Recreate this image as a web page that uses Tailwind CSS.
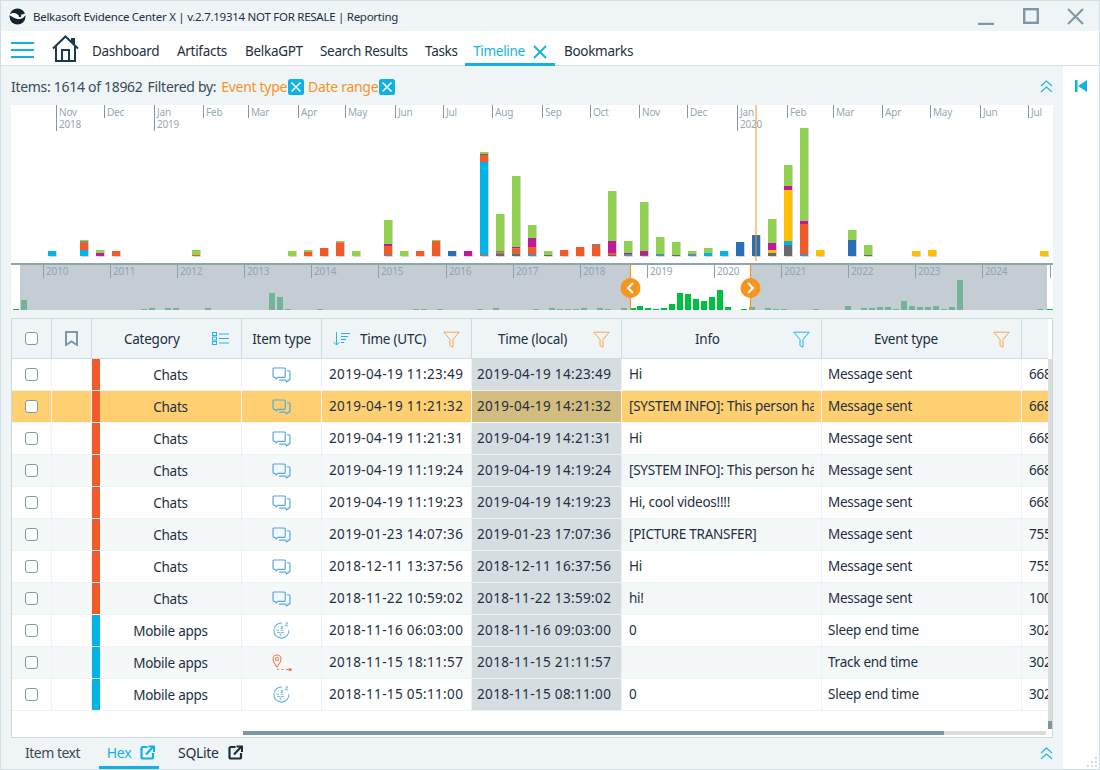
<!DOCTYPE html>
<html lang="en">
<head>
<meta charset="utf-8">
<title>Belkasoft Evidence Center X</title>
<script src="https://cdn.jsdelivr.net/npm/@tailwindcss/browser@4"></script>
</head>
<body class="w-[1100px] h-[770px] overflow-hidden bg-white text-[#1d2f3f] font-['Noto_Sans',sans-serif] text-[13px]">
<svg width="0" height="0" class="absolute">
  <defs>
    <symbol id="chat" viewBox="0 0 20 17"><g fill="none" stroke="#4ea6e4" stroke-width="1.2"><path d="M2.2 1h10.6a1.2 1.2 0 0 1 1.2 1.2v7.6a1.2 1.2 0 0 1-1.2 1.2H6l-1.5 1.6L3 11h-.8A1.2 1.2 0 0 1 1 9.8V2.2A1.2 1.2 0 0 1 2.2 1z"/><path d="M16 4h2a1 1 0 0 1 1 1v8a1 1 0 0 1-1 1h-1v.6L15.500 15.800 14 14H7.500"/></g></symbol>
    <symbol id="sleep" viewBox="0 0 18 18"><g fill="none" stroke="#62ade6"><path d="M9.500 1.100A8 8 0 1 0 16.900 8.500" stroke-width="1.100"/><path d="M3.500 8.500q1.400 1 2.800 0M8.300 8.500q1.400 1 2.800 0M4.500 11q3.500 1 7 0" stroke-width="1"/><ellipse cx="8" cy="13.800" rx="1" ry=".8" fill="#62ade6" stroke="none"/><path d="M8.500 4.500h2l-2 2.200h2M13 1h3l-3 3h3" stroke-width=".9"/></g></symbol>
    <symbol id="track" viewBox="0 0 20 18"><g fill="none" stroke="#f47a55" stroke-width="1.100"><path d="M5 13C3 10 1 8 1 5a4 4 0 0 1 8 0c0 3-2 5-4 8z"/><circle cx="5" cy="5" r="1.500"/><path d="M5 15.500h12" stroke-dasharray="2 2.500"/></g><rect x="16.500" y="14.500" width="3" height="2.200" fill="#f15a29"/></symbol>
    <symbol id="funnel" viewBox="0 0 17 17"><path d="M.8 1.200h15.400L10 8.500v7.700l-3-1.600V8.500z" fill="none" stroke="currentColor" stroke-width="1"/></symbol>
    <symbol id="dbl" viewBox="0 0 13 13"><path d="M1 6 6.500 1 12 6M1 12l5.500-5L12 12" fill="none" stroke="#22b5e6" stroke-width="1.200"/></symbol>
    <symbol id="xx" viewBox="0 0 16 16"><rect width="16" height="16" rx="2.500" fill="#0fb0e2"/><path d="M3.500 3.500l9 9M12.500 3.500l-9 9" stroke="#fff" stroke-width="1.500"/></symbol>
    <symbol id="open" viewBox="0 0 15 15"><g fill="none" stroke="currentColor" stroke-width="2.200"><path d="M7.500 2H3a1.500 1.500 0 0 0-1.500 1.500v8.500A1.500 1.500 0 0 0 3 13.500h8.500A1.500 1.500 0 0 0 13 12V8"/><path d="M6 9.500l7-7.500M8.500 1.500H14V7"/></g></symbol>
  </defs>
</svg>

<div class="w-full h-full flex flex-col border border-[#d2dfe5]">
  <!-- title bar -->
  <div class="h-[30px] shrink-0 bg-[#eff4f7] flex items-center pl-[8px]">
    <svg width="17" height="17" viewBox="0 0 17 17" class="shrink-0"><circle cx="8.500" cy="8.500" r="8" fill="#13232f"/><path d="M0 6.500C4 4 7.500 4.500 9.500 7.500L16.500 5.500C16 9.500 12.500 11.500 9 11C6 10.500 3 9 0 6.500z" fill="#fff"/><circle cx="11" cy="8" r="1.200" fill="#13232f"/></svg>
    <span class="ml-[7px] pt-[2px] text-[11.500px] tracking-[-0.27px] text-[#1d2f3f] whitespace-nowrap">Belkasoft Evidence Center X | v.2.7.19314 NOT FOR RESALE | Reporting</span>
    <div class="ml-auto flex items-center pr-[15px]">
      <svg width="16" height="17" viewBox="0 0 16 17"><path d="M0 16h16" stroke="#7d98a4" stroke-width="2.500"/></svg>
      <svg width="16" height="16" viewBox="0 0 16 16" class="ml-[29px]"><rect x="1.200" y="1.200" width="13.600" height="13.600" fill="none" stroke="#7d98a4" stroke-width="2.400"/></svg>
      <svg width="17" height="17" viewBox="0 0 17 17" class="ml-[28px]"><path d="M1 1l15 15M16 1L1 16" stroke="#7d98a4" stroke-width="2"/></svg>
    </div>
  </div>
  <!-- nav -->
  <div class="h-[35px] shrink-0 bg-white border-b border-[#d2dfe5] flex items-center relative">
    <svg width="23" height="16" viewBox="0 0 23 16" class="ml-[10px] mt-[4px]"><path d="M0 1h23M0 8h23M0 15h23" stroke="#10b2e4" stroke-width="2"/></svg>
    <svg width="27" height="27" viewBox="0 0 27 27" class="ml-[18px]"><g fill="none" stroke="#1c3a4f" stroke-width="2"><path d="M1 13.500 13.500 1.500 26 13.500"/><path d="M4 11v15h19V11"/><path d="M10 26V15h7v11"/><path d="M20 7V4h2v5"/></g></svg>
    <div class="ml-[13px] flex items-center h-full text-[13.500px] tracking-[-0.3px] whitespace-nowrap">
      <span class="w-[85px] pt-[6px]">Dashboard</span>
      <span class="w-[68px] pt-[6px]">Artifacts</span>
      <span class="w-[75px] pt-[6px]">BelkaGPT</span>
      <span class="w-[105px] pt-[6px]">Search Results</span>
      <span class="w-[40px] pt-[6px]">Tasks</span>
      <div class="w-[90px] h-full pt-[8px] flex items-center justify-center text-[#10b2e4] border-b-[3px] border-[#10b2e4] relative top-[1px]">
        <span>Timeline</span>
        <svg width="14" height="14" viewBox="0 0 14 14" class="ml-[8px]"><path d="M1 1l12 12M13 1L1 13" stroke="#10b2e4" stroke-width="1.800"/></svg>
      </div>
      <span class="ml-[9px] pt-[6px]">Bookmarks</span>
    </div>
  </div>
  <!-- main -->
  <div class="flex-1 flex min-h-0">
    <div class="w-[1062px] shrink-0 bg-[#eff4f7] pl-[10px] flex flex-col">
      <!-- toolbar -->
      <div class="h-[39px] shrink-0 flex items-center pr-[10px] pt-[2px] text-[14px] tracking-[-0.3px] whitespace-nowrap">
        <span class="text-[#3a4b58] mr-[5px]">Items: 1614 of 18962</span>
        <span class="text-[#3a4b58] mr-[5px]">Filtered by:</span>
        <span class="text-[#f7941d]">Event type</span>
        <svg width="16" height="16" class="ml-[1px] mr-[4px]"><use href="#xx"/></svg>
        <span class="text-[#f7941d]">Date range</span>
        <svg width="16" height="16" class="ml-[1px]"><use href="#xx"/></svg>
        <svg width="13" height="13" class="ml-auto"><use href="#dbl"/></svg>
      </div>
      <!-- chart -->
      <svg id="chart" width="1042" height="205" viewBox="11 105 1042 205" class="shrink-0 bg-white block">
        <g id="chartbars"></g>
        <g stroke="#7f9aa6" stroke-width="1">
          <path d="M56.500 105v26M104.500 105v13M154.500 105v26M203.500 105v13M248.500 105v13M298.500 105v13M345.500 105v13M395.500 105v13M443.500 105v13M492.500 105v13M542.500 105v13M590.500 105v13M639.500 105v13M687.500 105v13M737.500 105v26M787.500 105v13M833.500 105v13M882.500 105v13M930.500 105v13M980.500 105v13M1028.500 105v13"/>
        </g>
        <g fill="#93a9b5" font-size="10" letter-spacing="-0.2">
          <text x="59" y="115.500">Nov</text><text x="59" y="128">2018</text><text x="107" y="115.500">Dec</text><text x="157" y="115.500">Jan</text><text x="157" y="128">2019</text><text x="206" y="115.500">Feb</text><text x="251" y="115.500">Mar</text><text x="301" y="115.500">Apr</text><text x="348" y="115.500">May</text><text x="398" y="115.500">Jun</text><text x="446" y="115.500">Jul</text><text x="495" y="115.500">Aug</text><text x="545" y="115.500">Sep</text><text x="593" y="115.500">Oct</text><text x="642" y="115.500">Nov</text><text x="690" y="115.500">Dec</text><text x="740" y="115.500">Jan</text><text x="740" y="128">2020</text><text x="790" y="115.500">Feb</text><text x="836" y="115.500">Mar</text><text x="885" y="115.500">Apr</text><text x="933" y="115.500">May</text><text x="983" y="115.500">Jun</text><text x="1031" y="115.500">Jul</text>
        </g>
        <path d="M756 105v156" stroke="#f7941d" stroke-width="1"/>
        <rect x="20" y="265" width="1027" height="45" fill="#c5cdd4"/>
        <rect x="630" y="265" width="120" height="45" fill="#fff"/>
        <g id="overview"></g>
        <path d="M11 264h1042" stroke="#8ea5ae" stroke-width="2"/>
        <g stroke="#8ba0ab" stroke-width="1"><path d="M43.500 265v13M110.500 265v13M177.500 265v13M244.500 265v13M311.500 265v13M378.500 265v13M446.500 265v13M513.500 265v13M580.500 265v13M647.500 265v13M714.500 265v13M781.500 265v13M848.500 265v13M915.500 265v13M982.500 265v13M1050.500 265v13"/></g>
        <g fill="#93a5b0" font-size="10" letter-spacing="-0.1">
          <text x="46" y="275">2010</text><text x="113" y="275">2011</text><text x="180" y="275">2012</text><text x="247" y="275">2013</text><text x="314" y="275">2014</text><text x="381" y="275">2015</text><text x="449" y="275">2016</text><text x="516" y="275">2017</text><text x="583" y="275">2018</text><text x="650" y="275">2019</text><text x="717" y="275">2020</text><text x="784" y="275">2021</text><text x="851" y="275">2022</text><text x="918" y="275">2023</text><text x="985" y="275">2024</text>
        </g>
        <path d="M630.500 265v45M750.500 265v45" stroke="#f7941d" stroke-width="1.200"/>
        <circle cx="630.500" cy="288" r="10" fill="#f7941d"/>
        <circle cx="750.500" cy="288" r="10" fill="#f7941d"/>
        <path d="M633 283l-5 5 5 5M748 283l5 5-5 5" fill="none" stroke="#fff" stroke-width="2.200"/>
      </svg>
      <!-- table -->
      <div class="mt-[8px] h-[420px] shrink-0 w-[1042px] bg-white border border-[#cbd8de] relative overflow-hidden">
        <div class="w-[1036px] overflow-hidden">
          <div class="grid grid-cols-[40px_40px_150px_80px_150px_150px_200px_200px_26px] h-[40px] bg-[#eff4f7] border-b border-[#cfdde3] text-[13.500px] tracking-[-0.25px] whitespace-nowrap">
            <div class="border-r border-[#cfdde3] flex items-center justify-center"><span class="w-[13px] h-[13px] rounded-[3px] border border-[#7e9aa5] bg-white"></span></div>
            <div class="border-r border-[#cfdde3] flex items-center justify-center"><svg width="13" height="15" viewBox="0 0 13 15"><path d="M1 1h11v13L6.500 10.500 1 14z" fill="none" stroke="#7e98a4" stroke-width="2"/></svg></div>
            <div class="border-r border-[#cfdde3] flex items-center relative"><span class="ml-[32px] pt-[2px]">Category</span><svg width="17" height="13" viewBox="0 0 17 13" class="absolute left-[120px] top-[13px]"><g fill="none" stroke="#22b5e6"><rect x=".5" y=".5" width="4" height="3"/><rect x=".5" y="5" width="4" height="3"/><rect x=".5" y="9.500" width="4" height="3"/><path d="M7 2h10M7 6.500h10M7 11h10"/></g></svg></div>
            <div class="border-r border-[#cfdde3] flex items-center justify-center"><span class="pt-[2px]">Item type</span></div>
            <div class="border-r border-[#cfdde3] flex items-center relative">
              <svg width="18" height="14" viewBox="0 0 18 14" class="ml-[11px]"><g fill="none" stroke="#22b5e6"><path d="M3.500 0v13M.5 10l3 3 3-3"/><path d="M8 1.500h9M8 4.500h7M8 7.500h5M8 10.500h3"/></g></svg>
              <span class="ml-[9px] pt-[2px]">Time (UTC)</span>
              <svg width="17" height="17" class="absolute left-[121px] top-[12px] text-[#f7a64a]"><use href="#funnel"/></svg>
            </div>
            <div class="border-r border-[#cfdde3] flex items-center relative"><span class="ml-[26px] pt-[2px]">Time (local)</span><svg width="17" height="17" class="absolute left-[121px] top-[12px] text-[#f7a64a]"><use href="#funnel"/></svg></div>
            <div class="border-r border-[#cfdde3] flex items-center relative"><span class="ml-[73px] pt-[2px]">Info</span><svg width="17" height="17" class="absolute left-[171px] top-[12px] text-[#22b5e6]"><use href="#funnel"/></svg></div>
            <div class="border-r border-[#cfdde3] flex items-center relative"><span class="ml-[52px] pt-[2px]">Event type</span><svg width="17" height="17" class="absolute left-[171px] top-[12px] text-[#f7a64a]"><use href="#funnel"/></svg></div>
            <div></div>
          </div>

          <div class="text-[13.500px] tracking-[-0.25px] whitespace-nowrap">
            <!-- row 1 -->
            <div class="grid grid-cols-[40px_40px_150px_80px_150px_150px_200px_200px_26px] h-[32px] border-b border-[#edf2f4]">
              <div class="border-r border-[#edf2f4] flex items-center justify-center"><span class="w-[13px] h-[13px] rounded-[3px] border border-[#7e9aa5] bg-white"></span></div>
              <div class="border-r border-[#edf2f4]"></div>
              <div class="border-r border-[#edf2f4] flex"><span class="w-[8px] bg-[#f15a29]"></span><span class="flex-1 flex items-center justify-center pt-[2px]">Chats</span></div>
              <div class="border-r border-[#edf2f4] flex items-center justify-center"><svg width="19" height="16"><use href="#chat"/></svg></div>
              <div class="border-r border-[#edf2f4] flex items-center pl-[7px] tracking-[0.35px]">2019-04-19 11:23:49</div>
              <div class="border-r border-[#edf2f4] flex items-center pl-[5px] bg-[#d5dde0] tracking-[0.35px]">2019-04-19 14:23:49</div>
              <div class="border-r border-[#edf2f4] flex items-center pl-[7px]">Hi</div>
              <div class="border-r border-[#edf2f4] flex items-center pl-[6px]">Message sent</div>
              <div class="flex items-center pl-[7px] overflow-hidden">6684</div>
            </div>
            <!-- row 2 -->
            <div class="grid grid-cols-[40px_40px_150px_80px_150px_150px_200px_200px_26px] h-[32px] border-b border-[#f4f7f8] bg-[#ffd072]">
              <div class="border-r border-[#f4f7f8] flex items-center justify-center"><span class="w-[13px] h-[13px] rounded-[3px] border border-[#7e9aa5] bg-white"></span></div>
              <div class="border-r border-[#f4f7f8]"></div>
              <div class="border-r border-[#f4f7f8] flex"><span class="w-[8px] bg-[#f15a29]"></span><span class="flex-1 flex items-center justify-center pt-[2px]">Chats</span></div>
              <div class="border-r border-[#f4f7f8] flex items-center justify-center"><svg width="19" height="16"><use href="#chat"/></svg></div>
              <div class="border-r border-[#f4f7f8] flex items-center pl-[7px] tracking-[0.35px]">2019-04-19 11:21:32</div>
              <div class="border-r border-[#f4f7f8] flex items-center pl-[5px] bg-[#d3bc80] tracking-[0.35px]">2019-04-19 14:21:32</div>
              <div class="border-r border-[#f4f7f8] flex items-center pl-[7px] pr-[7px]"><span class="block overflow-hidden">[SYSTEM INFO]: This person has left</span></div>
              <div class="border-r border-[#f4f7f8] flex items-center pl-[6px]">Message sent</div>
              <div class="flex items-center pl-[7px] overflow-hidden">6684</div>
            </div>
            <!-- row 3 -->
            <div class="grid grid-cols-[40px_40px_150px_80px_150px_150px_200px_200px_26px] h-[32px] border-b border-[#edf2f4]">
              <div class="border-r border-[#edf2f4] flex items-center justify-center"><span class="w-[13px] h-[13px] rounded-[3px] border border-[#7e9aa5] bg-white"></span></div>
              <div class="border-r border-[#edf2f4]"></div>
              <div class="border-r border-[#edf2f4] flex"><span class="w-[8px] bg-[#f15a29]"></span><span class="flex-1 flex items-center justify-center pt-[2px]">Chats</span></div>
              <div class="border-r border-[#edf2f4] flex items-center justify-center"><svg width="19" height="16"><use href="#chat"/></svg></div>
              <div class="border-r border-[#edf2f4] flex items-center pl-[7px] tracking-[0.35px]">2019-04-19 11:21:31</div>
              <div class="border-r border-[#edf2f4] flex items-center pl-[5px] bg-[#d5dde0] tracking-[0.35px]">2019-04-19 14:21:31</div>
              <div class="border-r border-[#edf2f4] flex items-center pl-[7px]">Hi</div>
              <div class="border-r border-[#edf2f4] flex items-center pl-[6px]">Message sent</div>
              <div class="flex items-center pl-[7px] overflow-hidden">6684</div>
            </div>
            <!-- row 4 -->
            <div class="grid grid-cols-[40px_40px_150px_80px_150px_150px_200px_200px_26px] h-[32px] border-b border-[#edf2f4] bg-[#f5f8f9]">
              <div class="border-r border-[#edf2f4] flex items-center justify-center"><span class="w-[13px] h-[13px] rounded-[3px] border border-[#7e9aa5] bg-white"></span></div>
              <div class="border-r border-[#edf2f4]"></div>
              <div class="border-r border-[#edf2f4] flex"><span class="w-[8px] bg-[#f15a29]"></span><span class="flex-1 flex items-center justify-center pt-[2px]">Chats</span></div>
              <div class="border-r border-[#edf2f4] flex items-center justify-center"><svg width="19" height="16"><use href="#chat"/></svg></div>
              <div class="border-r border-[#edf2f4] flex items-center pl-[7px] tracking-[0.35px]">2019-04-19 11:19:24</div>
              <div class="border-r border-[#edf2f4] flex items-center pl-[5px] bg-[#d5dde0] tracking-[0.35px]">2019-04-19 14:19:24</div>
              <div class="border-r border-[#edf2f4] flex items-center pl-[7px] pr-[7px]"><span class="block overflow-hidden">[SYSTEM INFO]: This person has left</span></div>
              <div class="border-r border-[#edf2f4] flex items-center pl-[6px]">Message sent</div>
              <div class="flex items-center pl-[7px] overflow-hidden">6684</div>
            </div>
            <!-- row 5 -->
            <div class="grid grid-cols-[40px_40px_150px_80px_150px_150px_200px_200px_26px] h-[32px] border-b border-[#edf2f4]">
              <div class="border-r border-[#edf2f4] flex items-center justify-center"><span class="w-[13px] h-[13px] rounded-[3px] border border-[#7e9aa5] bg-white"></span></div>
              <div class="border-r border-[#edf2f4]"></div>
              <div class="border-r border-[#edf2f4] flex"><span class="w-[8px] bg-[#f15a29]"></span><span class="flex-1 flex items-center justify-center pt-[2px]">Chats</span></div>
              <div class="border-r border-[#edf2f4] flex items-center justify-center"><svg width="19" height="16"><use href="#chat"/></svg></div>
              <div class="border-r border-[#edf2f4] flex items-center pl-[7px] tracking-[0.35px]">2019-04-19 11:19:23</div>
              <div class="border-r border-[#edf2f4] flex items-center pl-[5px] bg-[#d5dde0] tracking-[0.35px]">2019-04-19 14:19:23</div>
              <div class="border-r border-[#edf2f4] flex items-center pl-[7px]">Hi, cool videos!!!!</div>
              <div class="border-r border-[#edf2f4] flex items-center pl-[6px]">Message sent</div>
              <div class="flex items-center pl-[7px] overflow-hidden">6684</div>
            </div>
            <!-- row 6 -->
            <div class="grid grid-cols-[40px_40px_150px_80px_150px_150px_200px_200px_26px] h-[32px] border-b border-[#edf2f4] bg-[#f5f8f9]">
              <div class="border-r border-[#edf2f4] flex items-center justify-center"><span class="w-[13px] h-[13px] rounded-[3px] border border-[#7e9aa5] bg-white"></span></div>
              <div class="border-r border-[#edf2f4]"></div>
              <div class="border-r border-[#edf2f4] flex"><span class="w-[8px] bg-[#f15a29]"></span><span class="flex-1 flex items-center justify-center pt-[2px]">Chats</span></div>
              <div class="border-r border-[#edf2f4] flex items-center justify-center"><svg width="19" height="16"><use href="#chat"/></svg></div>
              <div class="border-r border-[#edf2f4] flex items-center pl-[7px] tracking-[0.35px]">2019-01-23 14:07:36</div>
              <div class="border-r border-[#edf2f4] flex items-center pl-[5px] bg-[#d5dde0] tracking-[0.35px]">2019-01-23 17:07:36</div>
              <div class="border-r border-[#edf2f4] flex items-center pl-[7px]">[PICTURE TRANSFER]</div>
              <div class="border-r border-[#edf2f4] flex items-center pl-[6px]">Message sent</div>
              <div class="flex items-center pl-[7px] overflow-hidden">7551</div>
            </div>
            <!-- row 7 -->
            <div class="grid grid-cols-[40px_40px_150px_80px_150px_150px_200px_200px_26px] h-[32px] border-b border-[#edf2f4]">
              <div class="border-r border-[#edf2f4] flex items-center justify-center"><span class="w-[13px] h-[13px] rounded-[3px] border border-[#7e9aa5] bg-white"></span></div>
              <div class="border-r border-[#edf2f4]"></div>
              <div class="border-r border-[#edf2f4] flex"><span class="w-[8px] bg-[#f15a29]"></span><span class="flex-1 flex items-center justify-center pt-[2px]">Chats</span></div>
              <div class="border-r border-[#edf2f4] flex items-center justify-center"><svg width="19" height="16"><use href="#chat"/></svg></div>
              <div class="border-r border-[#edf2f4] flex items-center pl-[7px] tracking-[0.35px]">2018-12-11 13:37:56</div>
              <div class="border-r border-[#edf2f4] flex items-center pl-[5px] bg-[#d5dde0] tracking-[0.35px]">2018-12-11 16:37:56</div>
              <div class="border-r border-[#edf2f4] flex items-center pl-[7px]">Hi</div>
              <div class="border-r border-[#edf2f4] flex items-center pl-[6px]">Message sent</div>
              <div class="flex items-center pl-[7px] overflow-hidden">7551</div>
            </div>
            <!-- row 8 -->
            <div class="grid grid-cols-[40px_40px_150px_80px_150px_150px_200px_200px_26px] h-[32px] border-b border-[#edf2f4] bg-[#f5f8f9]">
              <div class="border-r border-[#edf2f4] flex items-center justify-center"><span class="w-[13px] h-[13px] rounded-[3px] border border-[#7e9aa5] bg-white"></span></div>
              <div class="border-r border-[#edf2f4]"></div>
              <div class="border-r border-[#edf2f4] flex"><span class="w-[8px] bg-[#f15a29]"></span><span class="flex-1 flex items-center justify-center pt-[2px]">Chats</span></div>
              <div class="border-r border-[#edf2f4] flex items-center justify-center"><svg width="19" height="16"><use href="#chat"/></svg></div>
              <div class="border-r border-[#edf2f4] flex items-center pl-[7px] tracking-[0.35px]">2018-11-22 10:59:02</div>
              <div class="border-r border-[#edf2f4] flex items-center pl-[5px] bg-[#d5dde0] tracking-[0.35px]">2018-11-22 13:59:02</div>
              <div class="border-r border-[#edf2f4] flex items-center pl-[7px]">hi!</div>
              <div class="border-r border-[#edf2f4] flex items-center pl-[6px]">Message sent</div>
              <div class="flex items-center pl-[7px] overflow-hidden">1002</div>
            </div>
            <!-- row 9 -->
            <div class="grid grid-cols-[40px_40px_150px_80px_150px_150px_200px_200px_26px] h-[32px] border-b border-[#edf2f4]">
              <div class="border-r border-[#edf2f4] flex items-center justify-center"><span class="w-[13px] h-[13px] rounded-[3px] border border-[#7e9aa5] bg-white"></span></div>
              <div class="border-r border-[#edf2f4]"></div>
              <div class="border-r border-[#edf2f4] flex"><span class="w-[8px] bg-[#00b4e6]"></span><span class="flex-1 flex items-center justify-center pt-[2px]">Mobile apps</span></div>
              <div class="border-r border-[#edf2f4] flex items-center justify-center"><svg width="17" height="17"><use href="#sleep"/></svg></div>
              <div class="border-r border-[#edf2f4] flex items-center pl-[7px] tracking-[0.35px]">2018-11-16 06:03:00</div>
              <div class="border-r border-[#edf2f4] flex items-center pl-[5px] bg-[#d5dde0] tracking-[0.35px]">2018-11-16 09:03:00</div>
              <div class="border-r border-[#edf2f4] flex items-center pl-[7px]">0</div>
              <div class="border-r border-[#edf2f4] flex items-center pl-[6px]">Sleep end time</div>
              <div class="flex items-center pl-[7px] overflow-hidden">3021</div>
            </div>
            <!-- row 10 -->
            <div class="grid grid-cols-[40px_40px_150px_80px_150px_150px_200px_200px_26px] h-[32px] border-b border-[#edf2f4] bg-[#f5f8f9]">
              <div class="border-r border-[#edf2f4] flex items-center justify-center"><span class="w-[13px] h-[13px] rounded-[3px] border border-[#7e9aa5] bg-white"></span></div>
              <div class="border-r border-[#edf2f4]"></div>
              <div class="border-r border-[#edf2f4] flex"><span class="w-[8px] bg-[#00b4e6]"></span><span class="flex-1 flex items-center justify-center pt-[2px]">Mobile apps</span></div>
              <div class="border-r border-[#edf2f4] flex items-center justify-center"><svg width="20" height="18"><use href="#track"/></svg></div>
              <div class="border-r border-[#edf2f4] flex items-center pl-[7px] tracking-[0.35px]">2018-11-15 18:11:57</div>
              <div class="border-r border-[#edf2f4] flex items-center pl-[5px] bg-[#d5dde0] tracking-[0.35px]">2018-11-15 21:11:57</div>
              <div class="border-r border-[#edf2f4] flex items-center pl-[7px]"></div>
              <div class="border-r border-[#edf2f4] flex items-center pl-[6px]">Track end time</div>
              <div class="flex items-center pl-[7px] overflow-hidden">3021</div>
            </div>
            <!-- row 11 -->
            <div class="grid grid-cols-[40px_40px_150px_80px_150px_150px_200px_200px_26px] h-[32px] border-b border-[#edf2f4]">
              <div class="border-r border-[#edf2f4] flex items-center justify-center"><span class="w-[13px] h-[13px] rounded-[3px] border border-[#7e9aa5] bg-white"></span></div>
              <div class="border-r border-[#edf2f4]"></div>
              <div class="border-r border-[#edf2f4] flex"><span class="w-[8px] bg-[#00b4e6]"></span><span class="flex-1 flex items-center justify-center pt-[2px]">Mobile apps</span></div>
              <div class="border-r border-[#edf2f4] flex items-center justify-center"><svg width="17" height="17"><use href="#sleep"/></svg></div>
              <div class="border-r border-[#edf2f4] flex items-center pl-[7px] tracking-[0.35px]">2018-11-15 05:11:00</div>
              <div class="border-r border-[#edf2f4] flex items-center pl-[5px] bg-[#d5dde0] tracking-[0.35px]">2018-11-15 08:11:00</div>
              <div class="border-r border-[#edf2f4] flex items-center pl-[7px]">0</div>
              <div class="border-r border-[#edf2f4] flex items-center pl-[6px]">Sleep end time</div>
              <div class="flex items-center pl-[7px] overflow-hidden">3021</div>
            </div>
          </div>
        </div>
        <!-- scrollbars -->
        <div class="absolute left-[231px] top-[412px] w-[803px] h-[4px] bg-[#dcdcdc]"><div class="w-[701px] h-full bg-[#7a98a4]"></div></div>
        <div class="absolute left-[1036px] top-[40px] w-[4px] h-[370px] bg-[#dcdcdc] flex items-end"><div class="w-full h-[8px] bg-[#7a98a4]"></div></div>
      </div>
      <!-- bottom tabs -->
      <div class="flex-1 flex items-stretch pr-[10px] text-[14px] tracking-[-0.3px] whitespace-nowrap">
        <span class="ml-[14px] w-[74px] pb-[3px] flex items-center text-[#3a4b58] tracking-[-0.5px]">Item text</span>
        <div class="w-[60px] flex items-center justify-center text-[#10b2e4] border-b-[3px] border-[#10b2e4] pl-[4px]"><span>Hex</span><svg width="15" height="15" class="ml-[9px]"><use href="#open"/></svg></div>
        <div class="ml-[19px] pb-[3px] flex items-center text-[#1d2f3f]"><span>SQLite</span><svg width="15" height="15" class="ml-[9px]"><use href="#open"/></svg></div>
        <svg width="13" height="13" class="ml-auto mt-[9px]"><use href="#dbl"/></svg>
      </div>
    </div>
    <!-- right rail -->
    <div class="flex-1 bg-white relative flex flex-col items-center">
      <svg width="12" height="12" viewBox="0 0 12 12" class="mt-[14px]"><path d="M0 0h2.500v12H0zM12 0v12L3 6z" fill="#10b2e4"/></svg>
      <svg width="11" height="11" viewBox="0 0 11 11" class="absolute right-[1px] bottom-[1px]"><g fill="#d3dde2"><rect x="8" y="0" width="2" height="2"/><rect x="4" y="4" width="2" height="2"/><rect x="8" y="4" width="2" height="2"/><rect x="0" y="8" width="2" height="2"/><rect x="4" y="8" width="2" height="2"/><rect x="8" y="8" width="2" height="2"/></g></svg>
    </div>
  </div>
</div>

<script>
const C={g:'#92d050',o:'#f15a29',c:'#00b4e6',b:'#2a6fb5',m:'#bf1a9c',y:'#ffc000',k:'#666a6e',t:'#4f8fb3',a:'#a07b5e'};
const B=[[48,'c',453,468],[80,'g',420,424,'k',424,428,'o',428,450,'c',450,468],[96,'g',450,459,'m',459,468],[112,'o',453,468],[192,'g',450,465,'o',465,468],[288,'g',453,468],[304,'g',450,456,'o',456,468],[320,'o',444,468],[336,'g',423,427,'o',427,468],[352,'g',453,468],[384,'g',360,432,'m',432,438,'o',438,465,'t',465,468],[400,'g',453,468],[416,'o',453,468],[432,'g',420,423,'o',423,468],[448,'b',453,468],[464,'m',453,468],[480,'g',156,162,'k',162,165,'o',165,186,'c',186,465,'o',465,468],[496,'g',342,453,'a',453,457,'o',457,460,'k',460,468],[512,'g',228,441,'m',441,445,'o',445,460,'k',460,468],[528,'g',375,414,'m',414,441,'o',441,462,'t',462,468],[544,'g',453,465,'k',465,468],[560,'o',450,468],[576,'o',441,468],[592,'a',432,438,'o',438,468],[608,'g',273,423,'m',423,459,'o',459,465,'k',465,468],[624,'g',423,459,'m',459,462,'t',462,468],[640,'g',306,453,'m',453,465,'k',465,468],[656,'g',411,462,'t',462,468],[672,'g',426,465,'k',465,468],[688,'g',453,462,'t',462,468],[704,'g',444,459,'c',459,468],[720,'c',453,468],[736,'b',426,468],[752,'k',405,408,'b',408,468],[768,'g',357,429,'m',429,450,'y',450,459,'k',459,468],[784,'g',195,258,'m',258,270,'y',270,423,'c',423,435,'k',435,468],[800,'g',84,363,'m',363,372,'o',372,462,'t',462,468],[816,'y',450,468],[848,'g',390,420,'b',420,468],[864,'g',435,465,'k',465,468],[912,'y',453,468],[928,'y',450,468],[1040,'y',453,468]];
const NS='http://www.w3.org/2000/svg';
function rect(p,x,y,w,h,f){const r=document.createElementNS(NS,'rect');r.setAttribute('x',x);r.setAttribute('y',y);r.setAttribute('width',w);r.setAttribute('height',h);r.setAttribute('fill',f);p.appendChild(r);}
const g=document.getElementById('chartbars');
const Y=z=>100+z/3;
for(const b of B){const x=b[0],first=Y(b[2]),last=Y(b[b.length-1]);rect(g,x+1,first,8,last-first+1,'#d4d4d4');for(let i=1;i<b.length;i+=3){rect(g,x,Y(b[i+1]),8,(b[i+2]-b[i+1])/3,C[b[i]]);}}
const ov=document.getElementById('overview');
const M=[[21,10],[141,1],[149,2],[165,2],[173,2],[205,2],[269,17],[277,13],[285,1],[317,1],[413,1],[421,1],[437,1],[477,1],[493,2],[533,1],[549,2],[557,1],[565,1],[573,1],[581,2],[597,2],[605,1],[621,2],[749,3],[765,2],[773,1],[781,1],[813,1],[845,4],[861,2],[869,2],[877,3],[885,3],[893,1],[901,9],[909,4],[917,3],[925,3],[933,4],[941,1],[949,3],[957,30],[1037,1]];
const G=[[13,1],[631,2],[637,4],[645,2],[653,1],[661,2],[669,6],[677,17],[685,16],[693,11],[701,9],[709,13],[717,20],[725,3],[741,1],[1047,1]];
for(const [x,h] of M)rect(ov,x,310-h,6,h,'#74b496');
for(const [x,h] of G)rect(ov,x,310-h,x===631?5:6,h,'#00c040');
</script>
</body>
</html>
